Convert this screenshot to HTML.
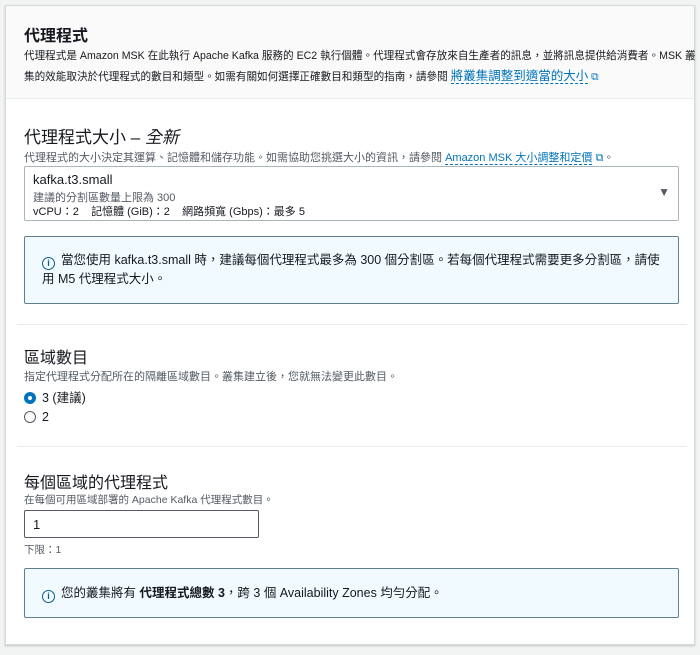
<!DOCTYPE html>
<html><head><meta charset="utf-8"><style>
*{margin:0;padding:0;box-sizing:border-box}
body{width:700px;height:655px;background:#f2f3f3;font-family:"Liberation Sans","Noto Sans CJK TC",sans-serif;color:#16191f;position:relative;overflow:hidden}
.card{position:absolute;left:5px;top:5px;width:690px;height:640px;background:#fff;border:1px solid #d5dbdb;box-shadow:0 1px 2px rgba(0,0,0,.2)}
.hdr{position:absolute;left:0;top:0;width:688px;height:93px;background:#fafafa;border-bottom:1px solid #eaeded}
.a{position:absolute;white-space:nowrap}
.t{font-size:16px;font-weight:bold}
.h{font-size:16px}
.d{font-size:11.5px;color:#545b64}
.lk{color:#0073bb;border-bottom:1px dashed #0073bb}
.box{position:absolute;left:18px;width:655px;border:1px solid #5f7f93;background:#f1faff;border-radius:2px}
.ic{display:inline-block;width:13px;height:13px;border:1.6px solid #0d5a85;border-radius:50%;font-size:9px;line-height:10px;text-align:center;font-weight:bold;color:#0d5a85;vertical-align:-2px;margin-right:6px}
.div{position:absolute;left:11px;width:670px;height:1px;background:#eaeded}
</style></head><body>
<div class="card">
<div class="hdr"></div>
<div class="a t" style="left:18px;top:16px">代理程式</div>
<div class="a d" style="left:18px;top:40px;line-height:20px;font-size:10.6px;color:#16191f">代理程式是 Amazon MSK 在此執行 Apache Kafka 服務的 EC2 執行個體。代理程式會存放來自生產者的訊息，並將訊息提供給消費者。MSK 叢</div>
<div class="a d" style="left:18px;top:60px;line-height:20px;font-size:10.6px;color:#16191f">集的效能取決於代理程式的數目和類型。如需有關如何選擇正確數目和類型的指南，請參閱 <span class="lk" style="font-size:12.5px">將叢集調整到適當的大小</span> <span style="color:#0073bb">⧉</span></div>
<div class="a h" style="left:18px;top:117px;font-size:17px">代理程式大小 – <i>全新</i></div>
<div class="a d" style="left:18px;top:143px;font-size:11px">代理程式的大小決定其運算、記憶體和儲存功能。如需協助您挑選大小的資訊，請參閱 <span class="lk">Amazon MSK 大小調整和定價</span> <span style="color:#0073bb">⧉</span>。</div>
<div style="position:absolute;left:18px;top:160px;width:655px;height:55px;border:1px solid #aab7b8;border-radius:2px">
<div class="a" style="left:8px;top:5px;font-size:13px">kafka.t3.small</div>
<div class="a d" style="left:8px;top:22px;font-size:11px">建議的分割區數量上限為 300</div>
<div class="a" style="left:8px;top:36px;font-size:11px;color:#16191f">vCPU：2 &nbsp;&nbsp; 記憶體 (GiB)：2 &nbsp;&nbsp; 網路頻寬 (Gbps)：最多 5</div>
<div class="a" style="right:8px;top:18px;font-size:12px;color:#545b64">▼</div>
</div>
<div class="box" style="top:230px;height:68px">
<div class="a" style="left:17px;top:14px;font-size:12.5px;line-height:18px;white-space:normal;width:625px"><span class="ic">i</span>當您使用 kafka.t3.small 時，建議每個代理程式最多為 300 個分割區。若每個代理程式需要更多分割區，請使用 M5 代理程式大小。</div>
</div>
<div class="div" style="top:318px"></div>
<div class="a h" style="left:18px;top:338px">區域數目</div>
<div class="a d" style="left:18px;top:362px;font-size:11px">指定代理程式分配所在的隔離區域數目。叢集建立後，您就無法變更此數目。</div>
<div class="a" style="left:18px;top:381px;font-size:12.5px"><span style="display:inline-block;width:12px;height:12px;border-radius:50%;border:4px solid #0073bb;vertical-align:-2px;margin-right:6px"></span>3 (建議)</div>
<div class="a" style="left:18px;top:404px;font-size:12.5px"><span style="display:inline-block;width:12px;height:12px;border-radius:50%;border:1px solid #545b64;vertical-align:-2px;margin-right:6px"></span>2</div>
<div class="div" style="top:440px"></div>
<div class="a h" style="left:18px;top:463px">每個區域的代理程式</div>
<div class="a d" style="left:18px;top:486px;font-size:10.5px">在每個可用區域部署的 Apache Kafka 代理程式數目。</div>
<div style="position:absolute;left:18px;top:504px;width:235px;height:28px;border:1px solid #545b64;border-radius:2px;font-size:13px;padding:6px 8px">1</div>
<div class="a d" style="left:18px;top:536px;font-size:10.5px">下限：1</div>
<div class="box" style="top:562px;height:50px">
<div class="a" style="left:17px;top:13px;font-size:12.5px"><span class="ic">i</span>您的叢集將有 <b>代理程式總數 3</b>，跨 3 個 Availability Zones 均勻分配。</div>
</div>
</div>
</body></html>
